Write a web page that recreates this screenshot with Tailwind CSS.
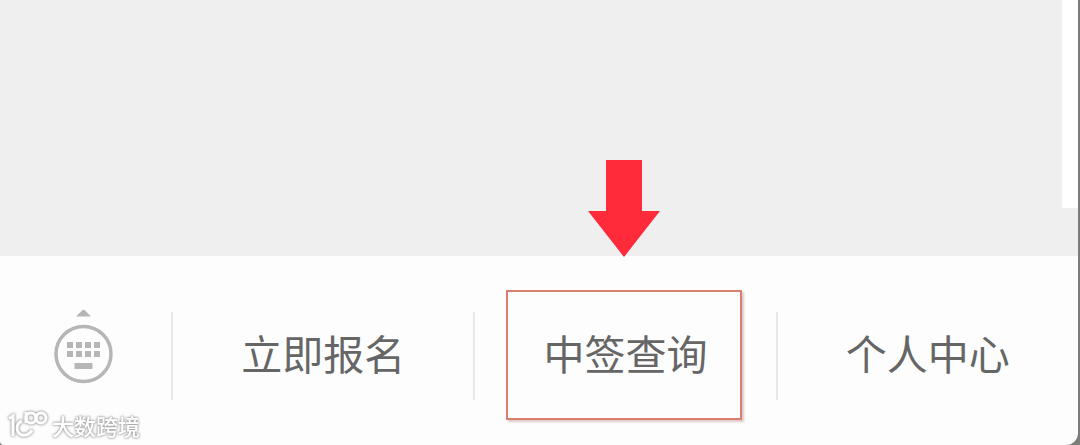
<!DOCTYPE html>
<html lang="zh-CN">
<head>
<meta charset="utf-8">
<meta name="viewport" content="width=device-width, initial-scale=1">
<title>中签查询</title>
<script src="https://cdn.jsdelivr.net/npm/@tailwindcss/browser@4"></script>
</head>
<body class="bg-[#7c7c78] font-['Noto_Sans_CJK_SC',sans-serif]">
<div class="relative mr-0.5 flex min-h-screen flex-col overflow-hidden rounded-br-xl rounded-bl-sm bg-[#fdfdfd]">
  <main class="flex flex-1 justify-end bg-[#efefef] pb-12">
    <div class="w-4 bg-white"></div>
  </main>

  <nav class="grid grid-cols-[171px_1fr_1fr_1fr] pt-14 pb-[45px] text-[41px] leading-none text-[#666]">
    <button type="button" aria-label="键盘" class="flex h-[88px] items-center justify-center">
      <svg class="h-24 w-16" viewBox="0 0 64 96" fill="#b6b6b6" aria-hidden="true">
        <path d="M22 8.500L28 2.500Q29.500 1 31 2.500L37 8.500Z"/>
        <circle cx="29.500" cy="46" r="27.500" fill="none" stroke="#b6b6b6" stroke-width="3.500"/>
        <path d="M13 34h6v6h-6zM22 34h6v6h-6zM31 34h6v6h-6zM40 34h6v6h-6zM13 43h6v6h-6zM22 43h6v6h-6zM31 43h6v6h-6zM40 43h6v6h-6zM20.500 55h18v6h-18z"/>
      </svg>
    </button>
    <button type="button" class="border-l-2 border-[#e8e8e8] pb-2">立即报名</button>
    <button type="button" class="relative border-l-2 border-[#e8e8e8] pb-2">中签查询
      <span class="absolute -top-5.5 right-[34px] -bottom-5 left-[31px] border-2 border-[#d97f6b] shadow-[2px_2px_2px_rgba(150,80,80,0.3)]"></span>
      <svg class="absolute right-[34px] bottom-full left-[31px] mx-auto mb-[55px] h-[97px] w-[72px]" viewBox="0 0 72 97" fill="#ff2a3a" aria-hidden="true"><path d="M18 0h36v51h18L36 97 0 51h18z"/></svg>
    </button>
    <button type="button" class="border-l-2 border-[#e8e8e8] pb-2">个人中心</button>
  </nav>

  <div class="absolute bottom-1 left-2 flex items-center gap-1 text-[22px] leading-8 font-medium text-white [filter:drop-shadow(0_0_1px_#999)_drop-shadow(0_0_1px_#bbb)]">
    <svg class="h-8 w-10" viewBox="0 0 40 32" fill="none" stroke="#fff" stroke-width="3" aria-hidden="true">
      <path d="M1 9.500l4-2.500v20M14 12c-5 2-6 7-4 11 3 5 11 4 14-2"/>
      <path d="M18 3v11"/>
      <circle cx="23" cy="9" r="5"/>
      <circle cx="33" cy="9" r="5"/>
    </svg>
    <span>大数跨境</span>
  </div>
</div>
</body>
</html>
